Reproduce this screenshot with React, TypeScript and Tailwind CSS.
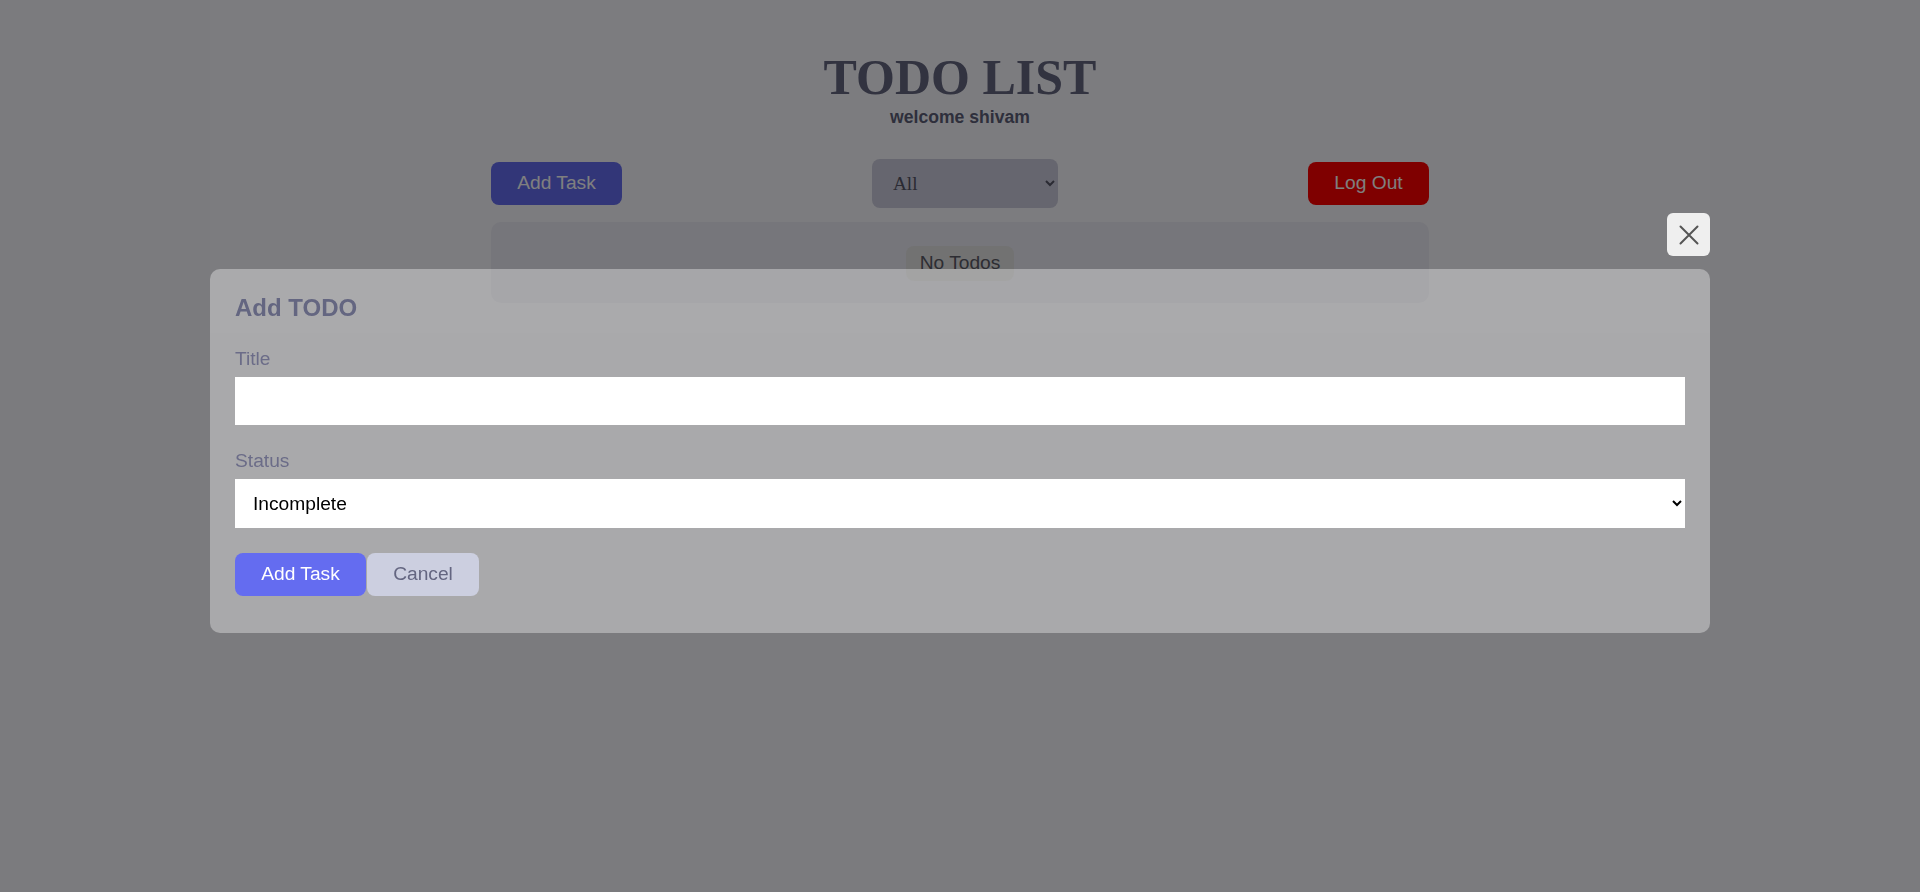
import React from 'react';

const XIcon: React.FC = () => (
  <svg width="20" height="20" viewBox="0 0 20 20" fill="none" stroke="#555" strokeWidth="2" strokeLinecap="round">
    <path d="M1.5 1.5 L18.5 18.5 M18.5 1.5 L1.5 18.5" />
  </svg>
);

export default function App() {
  return (
    <div className="relative h-[892px] overflow-hidden bg-[#f6f6fc] font-['Liberation_Sans',Arial,sans-serif]">
      {/* page behind the dialog */}
      <div className="mx-auto w-[1500px] bg-[#f9f9fe] pb-[30px] flex flex-col items-center">
        <h1 className="mt-[49px] text-[50px] leading-[57.5px] font-bold font-['Liberation_Serif','Times_New_Roman',serif] text-[#646681]">
          TODO LIST
        </h1>
        <p className="text-[17.6px] leading-[20.2px] font-bold text-[#5d5f78]">welcome shivam</p>

        <div className="mt-[32px] w-[938px] flex items-center justify-between">
          <button className="h-[43px] w-[131px] rounded-lg bg-[#646cf0] text-white text-[19.2px]">Add Task</button>
          <select
            defaultValue="all"
            className="h-[49px] w-[186px] rounded-lg bg-[#cccdde] pl-[17px] pr-[8px] text-[19.2px] text-[#555566] font-['Liberation_Serif',serif]"
          >
            <option value="all">All</option>
            <option value="incomplete">Incomplete</option>
            <option value="complete">Complete</option>
          </select>
          <button className="h-[43px] w-[121px] rounded-lg bg-[#ff0000] text-white text-[19.2px]">Log Out</button>
        </div>

        <div className="mt-[14px] w-[938px] h-[81px] rounded-[10px] bg-[#ececf6] flex justify-center pt-[24px]">
          <p className="h-[35px] px-[14px] rounded-lg bg-[#e4e4e4] text-[19.2px] text-[#5a5a66] flex items-center">
            No Todos
          </p>
        </div>
      </div>

      {/* dialog */}
      <div className="fixed inset-0 bg-black/50 flex flex-col items-center pt-[213px]">
        <div className="w-[1500px] flex flex-col items-end">
          <button className="w-[43px] h-[43px] rounded-md bg-[#efefef] flex items-center justify-center mb-[13px]">
            <XIcon />
          </button>
          <div className="w-full rounded-[10px] bg-white/35 pt-[25px] px-[25px] pb-[37px] flex flex-col">
            <h2 className="text-[24px] leading-[27.6px] font-bold text-[#646681] mb-[26px]">Add TODO</h2>

            <label className="text-[19.2px] leading-[22px] text-[#6b6c88] mb-[7px]">Title</label>
            <input type="text" className="h-[48px] w-full bg-white px-[14px] text-[19.2px] mb-[25px] outline-none" />

            <label className="text-[19.2px] leading-[22px] text-[#6b6c88] mb-[7px]">Status</label>
            <select
              defaultValue="incomplete"
              className="h-[49px] w-full bg-white pl-[14px] pr-[6px] text-[19.2px] text-black mb-[25px]"
            >
              <option value="incomplete">Incomplete</option>
              <option value="complete">Complete</option>
            </select>

            <div className="flex">
              <button className="h-[43px] w-[131px] rounded-lg bg-[#646cf0] text-white text-[19.2px]">Add Task</button>
              <button className="h-[43px] w-[112px] ml-px rounded-lg bg-[#cccfe0] text-[#646681] text-[19.2px]">Cancel</button>
            </div>
          </div>
        </div>
      </div>
    </div>
  );
}
